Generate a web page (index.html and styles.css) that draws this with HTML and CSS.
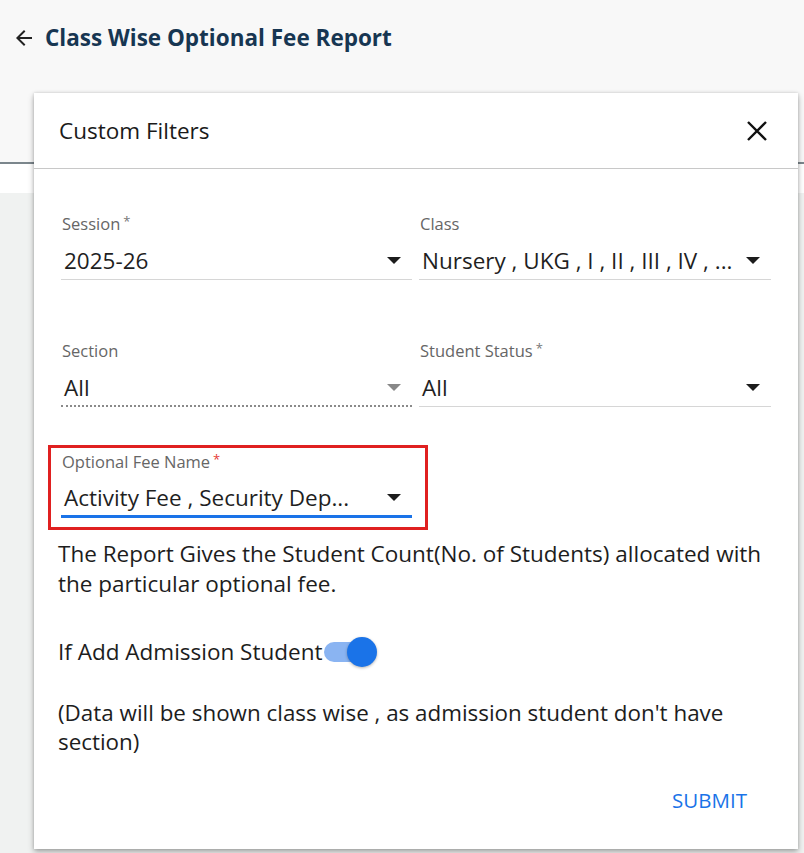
FILE: index.html
```html
<!DOCTYPE html>
<html>
<head>
<meta charset="utf-8">
<link rel="stylesheet" href="styles.css">
</head>
<body>
<div class="page">
  <header class="topbar">
    <svg class="back" width="24" height="24" viewBox="0 0 24 24"><path d="M20 11H7.83l5.59-5.59L12 4l-8 8 8 8 1.41-1.41L7.83 13H20v-2z" fill="#222"/></svg>
    <h1 class="title">Class Wise Optional Fee Report</h1>
  </header>
  <div class="rule"></div>
  <div class="strip"></div>
  <div class="content"></div>

  <div class="dialog">
    <div class="dlg-head">
      <span class="dlg-title">Custom Filters</span>
      <svg class="close" width="22" height="22" viewBox="0 0 22 22"><path d="M2 2L20 20M20 2L2 20" stroke="#111" stroke-width="2.4"/></svg>
    </div>
    <div class="dlg-body">
      <div class="grid">
        <div class="field">
          <div class="label">Session<span class="req">*</span></div>
          <div class="value"><span class="val">2025-26</span><span class="caret"></span></div>
        </div>
        <div class="field">
          <div class="label">Class</div>
          <div class="value"><span class="val">Nursery , UKG , I , II , III , IV , ...</span><span class="caret"></span></div>
        </div>
        <div class="field">
          <div class="label">Section</div>
          <div class="value disabled"><span class="val">All</span><span class="caret grey"></span></div>
        </div>
        <div class="field">
          <div class="label">Student Status<span class="req">*</span></div>
          <div class="value"><span class="val">All</span><span class="caret"></span></div>
        </div>
      </div>
      <div class="highlight">
        <div class="field">
          <div class="label">Optional Fee Name<span class="req red">*</span></div>
          <div class="value focused"><span class="val">Activity Fee , Security Dep...</span><span class="caret"></span></div>
        </div>
      </div>
      <p class="desc">The Report Gives the Student Count(No. of Students) allocated with the particular optional fee.</p>
      <div class="toggle-row">
        <span>If Add Admission Student</span>
        <span class="switch"><span class="track"></span><span class="knob"></span></span>
      </div>
      <p class="note">(Data will be shown class wise , as admission student don't have section)</p>
      <div class="actions"><button class="submit">SUBMIT</button></div>
    </div>
  </div>
</div>
</body>
</html>
```

FILE: styles.css
```css
* { box-sizing: border-box; }
html, body { margin: 0; padding: 0; }
body {
  width: 804px;
  height: 853px;
  overflow: hidden;
  font-family: "Open Sans", sans-serif;
  color: #1d1d1d;
  background: #f0f2f1;
}
.page { position: relative; width: 804px; height: 853px; }
.topbar {
  height: 162px;
  background: #f8f8f8;
  display: flex;
  align-items: flex-start;
  padding: 25px 0 0 12px;
  gap: 9px;
}
.back { margin-top: 1px; }
.title {
  margin: 0;
  font-size: 22.5px;
  line-height: 26px;
  font-weight: 700;
  color: #173652;
}
.rule { height: 2px; background: #7b868c; }
.strip { height: 29px; background: #fff; }
.content { height: 660px; background: #f0f2f1; }

.dialog {
  position: absolute;
  left: 34px;
  top: 93px;
  width: 764px;
  height: 756px;
  background: #fff;
  box-shadow: 0 3px 6px rgba(0,0,0,0.3), 0 0 3px rgba(0,0,0,0.15);
}
.dlg-head {
  height: 76px;
  border-bottom: 1px solid #c8c8c8;
  display: flex;
  align-items: center;
  justify-content: space-between;
  padding: 0 30px 0 25px;
}
.dlg-title { font-size: 22.5px; color: #1a1a1a; margin-top: 0; }
.close { margin-top: 0px; }
.dlg-body { padding: 45px 27px 0 27px; }
.grid {
  display: grid;
  grid-template-columns: 351px 352px;
  column-gap: 7px;
  row-gap: 61px;
}
.label {
  font-size: 16.5px;
  line-height: 20px;
  height: 20px;
  color: #666;
  padding-left: 1px;
  white-space: nowrap;
}
.req { font-size: 13px; line-height: 0; vertical-align: 4px; margin-left: 3px; color: #777; }
.req.red { color: #e53935; }
.value {
  margin-top: 10px;
  height: 36px;
  display: flex;
  align-items: center;
  justify-content: space-between;
  border-bottom: 1px solid #d6d6d6;
  padding: 0 11px 2px 3px;
}
.val { font-size: 22.5px; color: #1f1f1f; white-space: nowrap; }
.value.disabled { border-bottom: 2px dotted #8a8a8a; }
.value.focused { border-bottom: 3px solid #1a73e8; }
.caret {
  width: 0; height: 0;
  border-left: 7px solid transparent;
  border-right: 7px solid transparent;
  border-top: 7px solid #1c1c1c;
}
.caret.grey { border-top-color: #888; }
.highlight {
  margin: 38px 0 0 -13px;
  width: 380px;
  border: 3px solid #e02020;
  padding: 4px 0 9px 10px;
}
.highlight .field { width: 351px; }
.highlight .value { margin-top: 10px; }
.desc {
  margin: 9px 0 0 -3px;
  font-size: 22.5px;
  line-height: 30px;
  color: #1d1d1d;
}
.toggle-row {
  margin: 38px 0 0 -3px;
  display: flex;
  align-items: center;
  font-size: 22.5px;
  line-height: 30px;
  height: 30px;
}
.switch { position: relative; width: 54px; height: 30px; display: inline-block; }
.track {
  position: absolute;
  left: 1px; top: 5px;
  width: 44px; height: 20px;
  border-radius: 10px;
  background: #8ab4f2;
}
.knob {
  position: absolute;
  left: 24px; top: 0;
  width: 30px; height: 30px;
  border-radius: 50%;
  background: #1a73e8;
  box-shadow: 0 1px 3px rgba(0,0,0,0.3);
}
.note {
  margin: 31px 0 0 -3px;
  font-size: 22.4px;
  line-height: 29px;
  color: #1d1d1d;
  max-width: 700px;
}
.actions { display: flex; justify-content: flex-end; margin-top: 30px; padding-right: 24px; }
.submit {
  border: 0;
  background: none;
  font-family: inherit;
  font-size: 20.5px;
  font-weight: 500;
  color: #1a73e8;
  padding: 0;
}
```
